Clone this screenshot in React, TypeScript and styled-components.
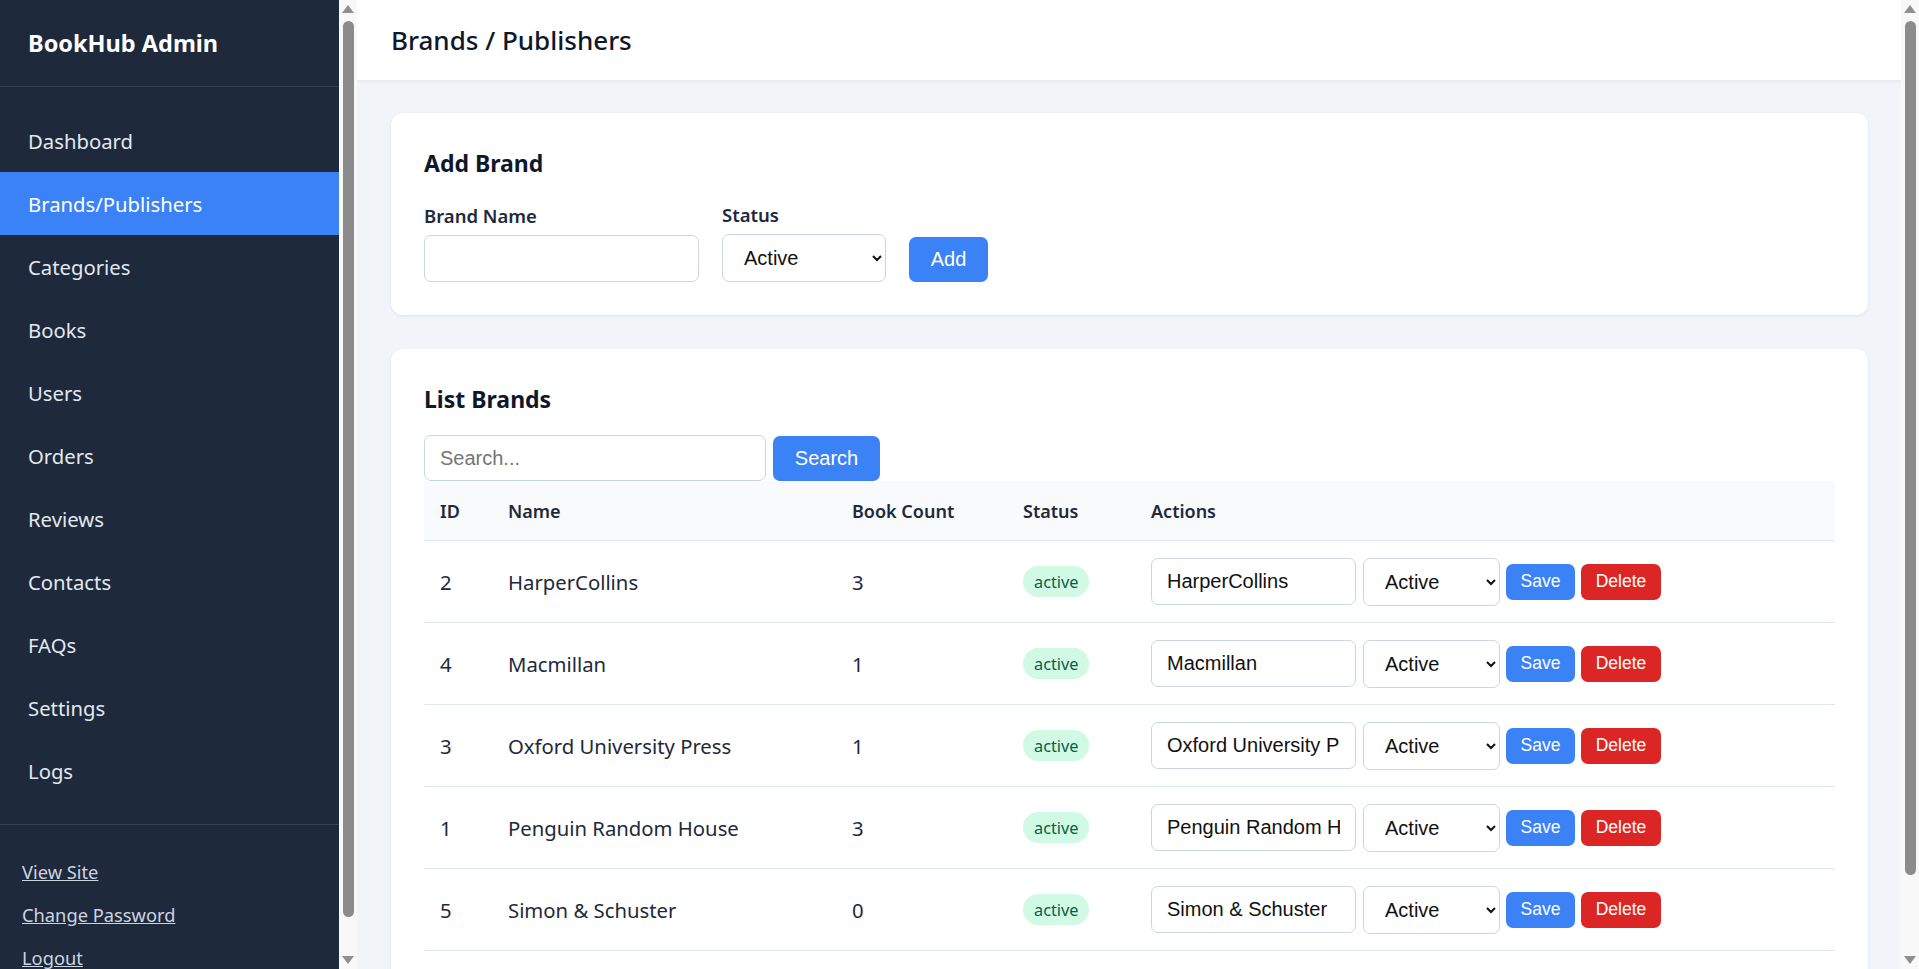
import React from "react";
import styled, { createGlobalStyle } from "styled-components";

const GlobalStyle = createGlobalStyle`
  *, *::before, *::after { box-sizing: border-box; }
  html, body { margin: 0; height: 100%; }
  body {
    font-family: "Noto Sans", "Open Sans", sans-serif;
    color: #1e293b;
    overflow: hidden;
  }
`;

const navItems = [
  "Dashboard",
  "Brands/Publishers",
  "Categories",
  "Books",
  "Users",
  "Orders",
  "Reviews",
  "Contacts",
  "FAQs",
  "Settings",
  "Logs",
];

const brands = [
  { id: 2, name: "HarperCollins", count: 3 },
  { id: 4, name: "Macmillan", count: 1 },
  { id: 3, name: "Oxford University Press", count: 1 },
  { id: 1, name: "Penguin Random House", count: 3 },
  { id: 5, name: "Simon & Schuster", count: 0 },
];

// the window's scrollbars, drawn since the headless browser hides native ones
const ScrollBar = ({ thumb }: { thumb: number }) => (
  <Rail>
    <RailArrow />
    <RailThumb len={thumb} />
    <RailSpacer />
    <RailArrow down />
  </Rail>
);

const App = () => {
  return (
    <Shell>
      <GlobalStyle />
      <Sidebar>
        <Logo>BookHub Admin</Logo>
        <Nav>
          {navItems.map((item) => (
            <NavItem key={item} active={item === "Brands/Publishers"}>
              {item}
            </NavItem>
          ))}
        </Nav>
        <SideFooter>
          <FootLink href="#">View Site</FootLink>
          <FootLink href="#">Change Password</FootLink>
          <FootLink href="#">Logout</FootLink>
        </SideFooter>
      </Sidebar>
      <ScrollBar thumb={896} />

      <Main>
        <TopBar>
          <PageTitle>Brands / Publishers</PageTitle>
        </TopBar>
        <Content>
          <Card>
            <CardTitle>Add Brand</CardTitle>
            <FormRow>
              <Field>
                <Label>Brand Name</Label>
                <TextInput wide="275px" />
              </Field>
              <Field>
                <Label>Status</Label>
                <Select wide="164px" defaultValue="active">
                  <option value="active">Active</option>
                  <option value="inactive">Inactive</option>
                </Select>
              </Field>
              <Button bg="#3b82f6" wide="79px" tall="45px" size="20px">
                Add
              </Button>
            </FormRow>
          </Card>

          <Card>
            <CardTitle small>List Brands</CardTitle>
            <SearchRow>
              <TextInput wide="342px" tall="46px" placeholder="Search..." />
              <Button bg="#3b82f6" wide="107px" tall="45px" size="20px">
                Search
              </Button>
            </SearchRow>
            <Table>
              <thead>
                <tr>
                  <Th style={{ width: 68 }}>ID</Th>
                  <Th style={{ width: 344 }}>Name</Th>
                  <Th style={{ width: 171 }}>Book Count</Th>
                  <Th style={{ width: 128 }}>Status</Th>
                  <Th>Actions</Th>
                </tr>
              </thead>
              <tbody>
                {brands.map((b) => (
                  <tr key={b.id}>
                    <Td>{b.id}</Td>
                    <Td>{b.name}</Td>
                    <Td>{b.count}</Td>
                    <Td>
                      <Badge>active</Badge>
                    </Td>
                    <Td>
                      <Actions>
                        <TextInput wide="205px" defaultValue={b.name} />
                        <Select wide="137px" defaultValue="active">
                          <option value="active">Active</option>
                          <option value="inactive">Inactive</option>
                        </Select>
                        <Button bg="#3b82f6" wide="69px" tall="36px" size="17.5px">
                          Save
                        </Button>
                        <Button bg="#dc2626" wide="80px" tall="36px" size="17.5px">
                          Delete
                        </Button>
                      </Actions>
                    </Td>
                  </tr>
                ))}
              </tbody>
            </Table>
          </Card>
        </Content>
      </Main>
      <ScrollBar thumb={854} />
    </Shell>
  );
};

export default App;

const Shell = styled.div`
  display: flex;
  height: 100vh;
  background: #f1f5f9;
`;

const Rail = styled.div`
  width: 18px;
  flex-shrink: 0;
  height: 100%;
  display: flex;
  flex-direction: column;
  align-items: center;
  background: #f8f8f8;
`;

const RailArrow = styled.div<{ down?: boolean }>`
  width: 100%;
  height: 18px;
  display: flex;
  align-items: center;
  justify-content: center;
  &::before {
    content: "";
    border-left: 6.5px solid transparent;
    border-right: 6.5px solid transparent;
    ${(p) => (p.down ? "border-top" : "border-bottom")}: 8px solid #8f8f8f;
  }
`;

const RailThumb = styled.div<{ len: number }>`
  width: 11px;
  height: ${(p) => p.len}px;
  margin-top: 3px;
  border-radius: 6px;
  background: #8b8b8b;
`;

const RailSpacer = styled.div`
  flex: 1;
`;

const Sidebar = styled.aside`
  width: 339px;
  flex-shrink: 0;
  background: #1e293b;
  overflow: hidden;
`;

const Logo = styled.div`
  height: 87px;
  display: flex;
  align-items: center;
  padding: 0 28px;
  border-bottom: 1px solid #334155;
  color: #ffffff;
  font-size: 23.5px;
  font-weight: 700;
`;

const Nav = styled.nav`
  display: flex;
  flex-direction: column;
  padding: 22px 0;
  border-bottom: 1px solid #334155;
`;

const NavItem = styled.a<{ active?: boolean }>`
  display: flex;
  align-items: center;
  height: 63px;
  padding: 0 28px;
  font-size: 20.3px;
  color: ${(p) => (p.active ? "#ffffff" : "#e2e8f0")};
  background: ${(p) => (p.active ? "#3b82f6" : "transparent")};
  text-decoration: none;
  cursor: pointer;
`;

const SideFooter = styled.div`
  display: flex;
  flex-direction: column;
  align-items: flex-start;
  gap: 14px;
  padding: 32px 22px 0;
`;

const FootLink = styled.a`
  color: #cbd5e1;
  font-size: 18.3px;
  line-height: 29px;
  text-decoration: underline;
`;

const Main = styled.main`
  flex: 1;
  min-width: 0;
  overflow: hidden;
`;

const TopBar = styled.header`
  height: 80px;
  display: flex;
  align-items: center;
  padding: 0 34px;
  background: #ffffff;
  box-shadow: 0 1px 4px rgba(15, 23, 42, 0.08);
`;

const PageTitle = styled.h1`
  margin: 0;
  font-size: 26px;
  font-weight: 500;
  color: #0f172a;
`;

const Content = styled.div`
  display: flex;
  flex-direction: column;
  gap: 34px;
  padding: 33px 33px 74px 34px;
`;

const Card = styled.section`
  background: #ffffff;
  border-radius: 12px;
  box-shadow: 0 1px 3px rgba(15, 23, 42, 0.07);
  padding: 33px;
`;

const CardTitle = styled.h2<{ small?: boolean }>`
  margin: 0 0 ${(p) => (p.small ? "19px" : "22px")};
  font-size: 23px;
  line-height: 34px;
  font-weight: 700;
  color: #0f172a;
`;

const FormRow = styled.div`
  display: flex;
  align-items: flex-end;
  gap: 23px;
`;

const Field = styled.div`
  display: flex;
  flex-direction: column;
  gap: 7px;
`;

const Label = styled.label`
  font-size: 18.5px;
  line-height: 25px;
  font-weight: 600;
  color: #1e293b;
`;

const TextInput = styled.input<{ wide: string; tall?: string }>`
  width: ${(p) => p.wide};
  height: ${(p) => p.tall || "47px"};
  padding: 0 15px;
  border: 1px solid #cbd5e1;
  border-radius: 7px;
  background: #ffffff;
  font-family: "Liberation Sans", Arial, sans-serif;
  font-size: 20px;
  color: #111111;
  outline: none;
  &::placeholder {
    color: #757575;
  }
`;

const Select = styled.select<{ wide: string }>`
  width: ${(p) => p.wide};
  height: 48px;
  padding: 0 12px 0 17px;
  border: 1px solid #cbd5e1;
  border-radius: 7px;
  background: #ffffff;
  font-family: "Liberation Sans", Arial, sans-serif;
  font-size: 20px;
  color: #111111;
`;

const Button = styled.button<{ bg: string; wide: string; tall: string; size: string }>`
  width: ${(p) => p.wide};
  height: ${(p) => p.tall};
  padding: 0;
  border: none;
  border-radius: 7px;
  background: ${(p) => p.bg};
  color: #ffffff;
  font-family: "Liberation Sans", Arial, sans-serif;
  font-size: ${(p) => p.size};
  cursor: pointer;
`;

const SearchRow = styled.div`
  display: flex;
  align-items: center;
  gap: 7px;
`;

const Table = styled.table`
  width: 100%;
  table-layout: fixed;
  border-collapse: separate;
  border-spacing: 0;
`;

const Th = styled.th`
  height: 60px;
  padding: 0 16px;
  background: #f8fafc;
  border-bottom: 1px solid #e2e8f0;
  text-align: left;
  font-size: 18px;
  font-weight: 600;
  color: #1e293b;
`;

const Td = styled.td`
  height: 82px;
  padding: 0 16px;
  border-bottom: 1px solid #e2e8f0;
  font-size: 20.3px;
  color: #1e293b;
  white-space: nowrap;
`;

const Badge = styled.span`
  display: inline-flex;
  align-items: center;
  height: 31px;
  padding: 0 11px;
  border-radius: 999px;
  background: #d1fae5;
  color: #065f46;
  font-size: 16.3px;
`;

const Actions = styled.div`
  display: flex;
  align-items: center;
  gap: 6px;
  & > input {
    margin-right: 1px;
  }
`;
